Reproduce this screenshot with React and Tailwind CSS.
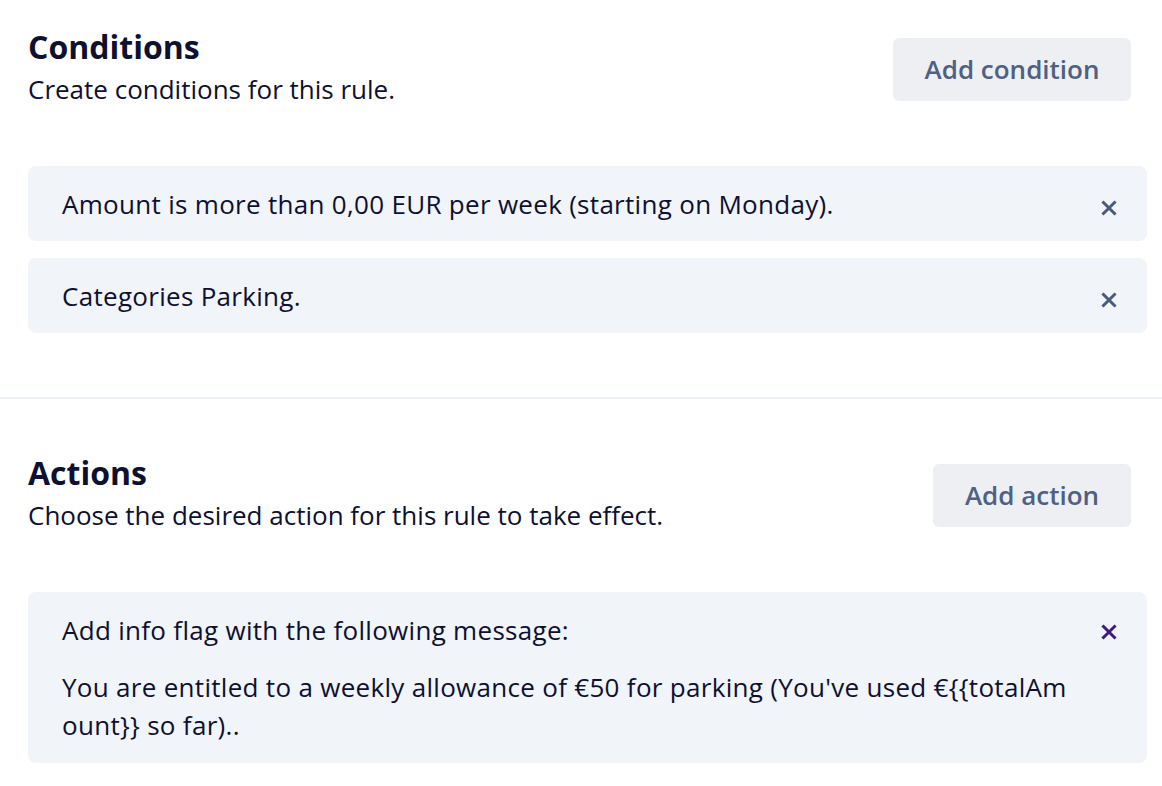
import React from "react";

function XIcon({ className }) {
  return (
    <svg width="16" height="16" viewBox="0 0 16 16" className={className} fill="none">
      <path d="M2.5 2.5 L13.5 13.5 M13.5 2.5 L2.5 13.5" stroke="currentColor" strokeWidth="3" strokeLinecap="square" />
    </svg>
  );
}

function Header({ title, subtitle, button, btnWidth }) {
  return (
    <div className="flex items-center justify-between">
      <div className="flex flex-col">
        <h2 className="text-[32px] leading-[44px] font-bold text-[#0e1030]">{title}</h2>
        <p className="text-[26px] leading-[40px] text-[#0e1030]">{subtitle}</p>
      </div>
      <button className={`${btnWidth} h-[63px] mt-[4px] mr-[16px] rounded-[6px] bg-[#edeff3] text-[26px] font-semibold text-[#4e6183]`}>
        {button}
      </button>
    </div>
  );
}

export default function App() {
  return (
    <div className="w-[1162px] h-[786px] bg-white overflow-hidden" style={{ fontFamily: "'Open Sans', sans-serif" }}>
      <div className="pl-[28px] pr-[15px] pt-[25px]">
        <Header title="Conditions" subtitle="Create conditions for this rule." button="Add condition" btnWidth="w-[238px]" />
        <div className="mt-[57px] flex flex-col gap-[17px]">
          <div className="h-[75px] flex items-center justify-between rounded-[8px] bg-[#f1f4f9] pl-[34px] pr-[30px]">
            <span className="text-[26px] leading-[38px] tracking-[0.3px] text-[#0e1030]">Amount is more than 0,00 EUR per week (starting on Monday).</span>
            <XIcon className="mt-[8px] text-[#4a5a7a]" />
          </div>
          <div className="h-[75px] flex items-center justify-between rounded-[8px] bg-[#f1f4f9] pl-[34px] pr-[30px]">
            <span className="text-[26px] leading-[38px] tracking-[0.3px] text-[#0e1030]">Categories Parking.</span>
            <XIcon className="mt-[8px] text-[#4a5a7a]" />
          </div>
        </div>
      </div>
      <div className="mt-[64px] h-[2px] bg-[#eef2f7]" />
      <div className="pl-[28px] pr-[15px] pt-[52px]">
        <Header title="Actions" subtitle="Choose the desired action for this rule to take effect." button="Add action" btnWidth="w-[198px]" />
        <div className="mt-[57px]">
          <div className="flex items-start justify-between rounded-[8px] bg-[#f1f4f9] pl-[34px] pr-[30px] py-[19px]">
            <div className="text-[26px] leading-[38px] tracking-[0.3px] text-[#0e1030]">
              <p>Add info flag with the following message:</p>
              <p className="mt-[19px]">
                You are entitled to a weekly allowance of €50 for parking (You've used €{"{{"}totalAm
                <br />
                ount{"}}"} so far)..
              </p>
            </div>
            <XIcon className="mt-[13px] text-[#3a1f7d]" />
          </div>
        </div>
      </div>
    </div>
  );
}
